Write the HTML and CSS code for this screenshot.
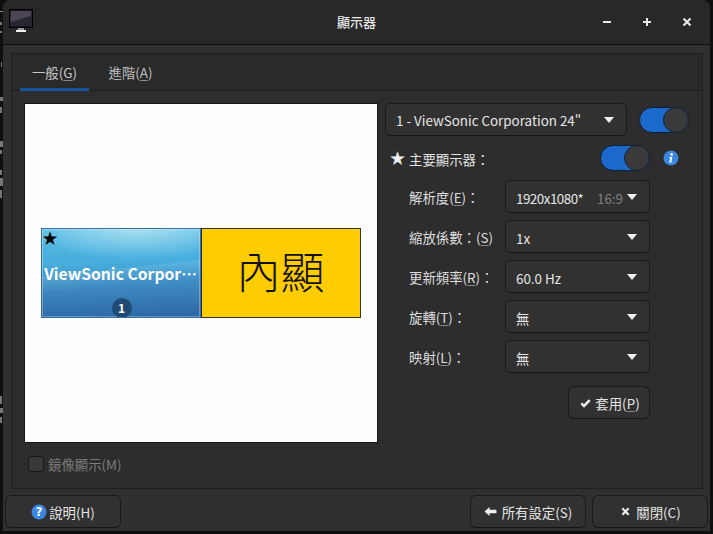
FILE: index.html
```html
<!DOCTYPE html>
<html lang="zh-Hant">
<head>
<meta charset="utf-8">
<title>顯示器</title>
<link rel="stylesheet" href="styles.css">
</head>
<body>
<svg class="desktop-bits" width="3" height="534" viewBox="0 0 3 534">
  <path d="M0 11h3v1H0z" fill="#8a7fc0"/>
  <path d="M0 22h2v3H0zM0 31h2v2H0zM1 62h1v5H1zM0 97h3v4H0zM0 107h2v6H0zM0 141h3v6H0zM0 150h2v4H0zM0 170h2v5H0zM0 178h3v8H0zM0 190h2v8H0zM0 396h2v8H0zM0 408h3v5H0zM0 417h2v6H0z" fill="#777"/>
</svg>
<div class="window">
  <header class="titlebar">
    <svg class="app-icon" width="26" height="24" viewBox="0 0 26 24">
      <rect x="0.5" y="0.5" width="23" height="18" fill="#0b0b0d" stroke="#000"/>
      <path d="M1 1.5h22v16H1z" fill="#2a2630"/>
      <path d="M2 2h20v5L2 13z" fill="#4a4550"/>
      <path d="M9 19h6v2H9z" fill="#999"/>
      <path d="M7 21h10v2H7z" fill="#eee"/>
    </svg>
    <div class="title">顯示器</div>
    <div class="wm">
      <svg width="12" height="12" viewBox="0 0 12 12"><path d="M2 6h8" class="wm-stroke"/></svg>
      <svg width="12" height="12" viewBox="0 0 12 12"><path d="M2 6h8M6 2v8" class="wm-stroke"/></svg>
      <svg width="12" height="12" viewBox="0 0 12 12"><path d="M2.5 2.5l7 7M9.5 2.5l-7 7" class="wm-stroke"/></svg>
    </div>
  </header>
  <main class="content">
    <section class="frame">
      <nav class="tabs">
        <div class="tab active">一般(<u>G</u>)</div>
        <div class="tab">進階(<u>A</u>)</div>
      </nav>
      <div class="page">
        <div class="left">
          <div class="preview">
            <div class="monitor primary">
              <span class="mon-star">★</span>
              <span class="mon-name">ViewSonic Corpor⋯</span>
              <span class="mon-num">1</span>
            </div>
            <div class="monitor internal">內顯</div>
          </div>
          <label class="mirror"><span class="checkbox"></span>鏡像顯示(M)</label>
        </div>
        <div class="right">
          <div class="top-row">
            <div class="combo wide"><span class="combo-text">1 - ViewSonic Corporation 24"</span><i class="arrow"></i></div>
            <div class="switch"><span class="knob"></span></div>
          </div>
          <div class="primary-row">
            <span class="star">★</span>
            <span class="primary-label">主要顯示器：</span>
            <div class="switch"><span class="knob"></span></div>
            <svg class="info" width="16" height="16" viewBox="0 0 16 16">
              <circle cx="8" cy="8" r="7.5" fill="#3b87e0"/>
              <circle cx="8.6" cy="4.4" r="1.3" fill="#fff"/>
              <path d="M6.4 7h3l-1.1 4.6h1v1H6.2l1.1-4.6h-1z" fill="#fff"/>
            </svg>
          </div>
          <div class="form">
            <div class="form-row">
              <span class="lbl">解析度(<u>E</u>)：</span>
              <div class="combo"><span class="combo-text tight">1920x1080*</span><span class="ratio">16:9</span><i class="arrow"></i></div>
            </div>
            <div class="form-row">
              <span class="lbl">縮放係數：(<u>S</u>)</span>
              <div class="combo"><span class="combo-text">1x</span><i class="arrow"></i></div>
            </div>
            <div class="form-row">
              <span class="lbl">更新頻率(<u>R</u>)：</span>
              <div class="combo"><span class="combo-text">60.0 Hz</span><i class="arrow"></i></div>
            </div>
            <div class="form-row">
              <span class="lbl">旋轉(<u>T</u>)：</span>
              <div class="combo"><span class="combo-text">無</span><i class="arrow"></i></div>
            </div>
            <div class="form-row">
              <span class="lbl">映射(<u>L</u>)：</span>
              <div class="combo"><span class="combo-text">無</span><i class="arrow"></i></div>
            </div>
          </div>
          <div class="apply-row">
            <div class="btn apply">
              <svg width="11" height="10" viewBox="0 0 13 12"><path d="M1.5 6.5l3.2 3L11.5 2.5" fill="none" stroke="#eee" stroke-width="3"/></svg>
              <span>套用(<u>P</u>)</span>
            </div>
          </div>
        </div>
      </div>
    </section>
    <footer class="actions">
      <div class="btn help">
        <svg width="16" height="16" viewBox="0 0 16 16"><circle cx="8" cy="8" r="7.5" fill="#3b87e0"/><text x="8" y="12" text-anchor="middle" class="q">?</text></svg>
        <span>說明(H)</span>
      </div>
      <div class="spacer"></div>
      <div class="btn settings">
        <svg width="13" height="11" viewBox="0 0 14 12"><path d="M0.5 6L6 1v3h7.5v4H6v3z" fill="#eee"/></svg>
        <span>所有設定(S)</span>
      </div>
      <div class="btn close">
        <svg width="9" height="9" viewBox="0 0 10 10"><path d="M1.5 1.5l7 7M8.5 1.5l-7 7" stroke="#eee" stroke-width="2.4"/></svg>
        <span>關閉(C)</span>
      </div>
    </footer>
  </main>
</div>
</body>
</html>
```
FILE: styles.css
```css
* { box-sizing: border-box; }
html, body { margin: 0; padding: 0; }
body {
  width: 713px;
  height: 534px;
  overflow: hidden;
  background: #0f0f10;
  font-family: "Noto Sans CJK TC", sans-serif;
  font-size: 13.4px;
  color: #e4e4e4;
  position: relative;
}
u { text-decoration-thickness: 1px; text-underline-offset: 2px; text-decoration-color: #888; }
.desktop-bits { position: absolute; left: 0; top: 0; }

.window {
  width: 707px;
  height: 531px;
  margin-left: 3px;
  background: #2f2f2f;
  border-radius: 8px 8px 0 0;
  display: flex;
  flex-direction: column;
}

.titlebar {
  height: 45px;
  flex: none;
  display: flex;
  align-items: center;
  position: relative;
  padding: 0 17px 0 6px;
  background: #282828;
  border-bottom: 1px solid #0c0c0c;
  border-radius: 8px 8px 0 0;
}
.app-icon { margin-top: -2px; }
.title {
  position: absolute;
  left: 0;
  right: 0;
  top: 12px;
  text-align: center;
  color: #e8e8e8;
  font-size: 13px;
  font-weight: 500;
  line-height: 20px;
}
.wm { margin-left: auto; display: flex; gap: 28px; position: relative; }
.wm-stroke { stroke: #eaeaea; stroke-width: 2; fill: none; }

.content {
  flex: 1;
  display: flex;
  flex-direction: column;
  padding: 8px 7px 3px 8px;
  background: #303030;
}
.frame {
  height: 436px;
  flex: none;
  border: 1px solid #1f1f1f;
  background: #2d2d2d;
  display: flex;
  flex-direction: column;
}
.tabs {
  height: 37px;
  flex: none;
  display: flex;
  background: #2a2a2a;
  border-bottom: 1px solid #1d1d1d;
  padding-left: 8px;
}
.tab {
  width: 69px;
  margin-right: 7px;
  text-align: center;
  line-height: 36px;
  color: #bdbdbd;
  position: relative;
}
.tab.active { color: #c8c8c8; }
.tab.active::after {
  content: "";
  position: absolute;
  left: 0;
  right: 0;
  bottom: -1px;
  height: 3px;
  background: #15539e;
}

.page {
  flex: 1;
  display: flex;
  padding: 12px 0 0 12px;
}
.left { width: 354px; margin-right: 7px; flex: none; }
.preview {
  width: 354px;
  height: 340px;
  background: #fdfdfd;
  border: 1px solid #161616;
  display: flex;
  align-items: center;
  justify-content: center;
  padding-right: 1px;
  position: relative;
}
.monitor {
  width: 160px;
  height: 90px;
  position: relative;
  overflow: hidden;
}
.primary {
  border: 1px solid #3a6ea5;
  box-shadow: inset 0 0 0 1px rgba(255,255,255,.28);
  background:
    linear-gradient(174deg, rgba(255,255,255,0) 45%, rgba(255,255,255,.1) 46%, rgba(255,255,255,0) 62%),
    radial-gradient(115px 36px at 60% -6%, rgba(205,238,246,.8), rgba(120,205,235,0) 100%),
    linear-gradient(178deg, #55bce4 0%, #47aedd 38%, #3f8cc3 62%, #2c66a6 100%);
  color: #fff;
}
.mon-star { position: absolute; left: 0; top: -1px; font-family: "DejaVu Sans"; font-size: 19px; line-height: 20px; color: #000; }
.mon-name {
  position: absolute;
  left: 0; right: 0; top: 34px;
  text-align: center;
  font-size: 15.7px;
  font-weight: 600;
  line-height: 22px;
  white-space: nowrap;
}
.mon-num {
  position: absolute;
  left: 70px; bottom: -1px;
  width: 20px; height: 20px;
  border-radius: 50%;
  background: #1f4a75;
  font-size: 12px;
  font-weight: 700;
  line-height: 20px;
  text-align: center;
}
.internal {
  border: 1px solid #333;
  border-left-color: #1d2a35;
  background: #ffcc00;
  color: #111;
  font-weight: 300;
  font-size: 44px;
  line-height: 82px;
  text-align: center;
}
.mirror {
  display: flex;
  align-items: center;
  gap: 4px;
  margin: 12px 0 0 4px;
  color: #7b7b7b;
  height: 18px;
}
.checkbox {
  width: 16px; height: 16px;
  border: 1px solid #1a1a1a;
  border-radius: 3px;
  background: #383838;
}

.right { width: 305px; flex: none; }
.top-row { display: flex; align-items: center; gap: 12px; }
.combo {
  height: 33px;
  width: 145px;
  display: flex;
  align-items: center;
  padding: 2px 12px 0 10px;
  background: #313131;
  border: 1px solid #1b1b1b;
  border-bottom-color: #141414;
  border-radius: 5px;
  color: #e6e6e6;
  white-space: nowrap;
}
.combo.wide { width: 242px; padding-top: 0; }
.combo-text { flex: 1; }
.tight { letter-spacing: -0.5px; }
.ratio { color: #7f7f7f; margin-right: 4px; }
.arrow {
  flex: none;
  width: 0; height: 0;
  margin-top: -2px;
  border-left: 5.5px solid transparent;
  border-right: 5.5px solid transparent;
  border-top: 6px solid #f0f0f0;
}
.wide .arrow { margin-top: 0; }
.switch {
  width: 50px;
  height: 26px;
  flex: none;
  border-radius: 13px;
  background: #1b6acb;
  border: 1px solid #0f1f33;
  position: relative;
}
.knob {
  position: absolute;
  right: -1px; top: -1px;
  width: 26px; height: 26px;
  border-radius: 50%;
  background: #3a3a3a;
  border: 1px solid #13233a;
}
.primary-row {
  display: flex;
  align-items: center;
  height: 26px;
  margin-top: 9px;
  padding-left: 4px;
}
.star { font-family: "DejaVu Sans"; font-size: 19px; line-height: 18px; color: #eee; width: 20px; }
.primary-label { width: 191px; padding-top: 2px; color: #e4e4e4; white-space: nowrap; }
.info { margin-left: 13px; }
.form {
  display: flex;
  flex-direction: column;
  gap: 7px;
  margin-top: 9px;
}
.form-row { display: flex; align-items: center; padding-left: 24px; }
.lbl { width: 96px; color: #dedede; white-space: nowrap; }

.apply-row { display: flex; margin-top: 13px; padding-left: 183px; }
.btn {
  height: 33px;
  display: flex;
  align-items: center;
  justify-content: center;
  gap: 4px;
  background: #313131;
  border: 1px solid #1b1b1b;
  border-bottom-color: #141414;
  border-radius: 6px;
  color: #e4e4e4;
  white-space: nowrap;
}
.apply { width: 82px; padding-left: 2px; }

.actions {
  display: flex;
  margin: 6px -5px 0 -6px;
  gap: 6px;
}
.help { width: 116px; gap: 2px; }
.spacer { flex: 1; }
.settings { width: 116px; gap: 5px; }
.close { width: 116px; gap: 6px; padding-left: 2px; }
.q { font-family: "DejaVu Sans"; font-size: 12px; font-weight: 700; fill: #fff; }
```
